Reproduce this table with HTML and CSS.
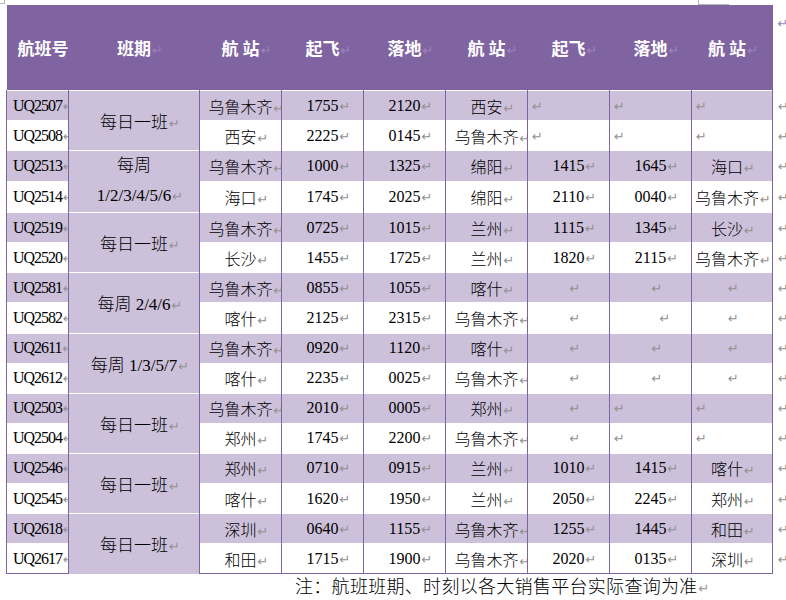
FILE: index.html
```html
<!DOCTYPE html>
<html lang="zh-CN">
<head>
<meta charset="utf-8">
<title>航班时刻表</title>
<link rel="stylesheet" href="styles.css">
</head>
<body>
<div class="page">
  <span class="crn crn-tl"></span>
  <span class="crn crn-tr"></span>
  <table class="tt">
    <colgroup>
      <col class="w62"><col class="w131"><col class="w82"><col class="w82"><col class="w82"><col class="w82"><col class="w82"><col class="w82"><col class="w81"><col class="w14">
    </colgroup>
    <thead>
      <tr class="head">
        <th class="h1">航班号</th>
        <th>班期<i class="pm"></i></th>
        <th>航 站<i class="pm"></i></th>
        <th>起飞<i class="pm"></i></th>
        <th>落地<i class="pm"></i></th>
        <th>航 站<i class="pm"></i></th>
        <th>起飞<i class="pm"></i></th>
        <th>落地<i class="pm"></i></th>
        <th class="c9">航 站<i class="pm"></i></th>
        <th class="end"><i class="pm"></i></th>
      </tr>
    </thead>
    <tbody>
      <tr class="a">
        <td class="fl">UQ2507<i class="pm"></i></td>
        <td class="sched" rowspan="2">每日一班<i class="pm"></i></td>
        <td>乌鲁木齐<i class="pm"></i></td><td>1755<i class="pm"></i></td><td>2120<i class="pm"></i></td><td>西安<i class="pm"></i></td>
        <td class="l"><i class="pm"></i></td><td class="l"><i class="pm"></i></td><td class="l"><i class="pm"></i></td>
        <td class="end"><i class="pm"></i></td>
      </tr>
      <tr>
        <td class="fl">UQ2508<i class="pm"></i></td>
        <td>西安<i class="pm"></i></td><td>2225<i class="pm"></i></td><td>0145<i class="pm"></i></td><td>乌鲁木齐<i class="pm"></i></td>
        <td class="l"><i class="pm"></i></td><td class="l"><i class="pm"></i></td><td class="l"><i class="pm"></i></td>
        <td class="end"><i class="pm"></i></td>
      </tr>
      <tr class="a">
        <td class="fl">UQ2513<i class="pm"></i></td>
        <td class="sched two" rowspan="2">每周<br>1/2/3/4/5/6<i class="pm"></i></td>
        <td>乌鲁木齐<i class="pm"></i></td><td>1000<i class="pm"></i></td><td>1325<i class="pm"></i></td><td>绵阳<i class="pm"></i></td>
        <td>1415<i class="pm"></i></td><td>1645<i class="pm"></i></td><td class="c9">海口<i class="pm"></i></td>
        <td class="end"><i class="pm"></i></td>
      </tr>
      <tr>
        <td class="fl">UQ2514<i class="pm"></i></td>
        <td>海口<i class="pm"></i></td><td>1745<i class="pm"></i></td><td>2025<i class="pm"></i></td><td>绵阳<i class="pm"></i></td>
        <td>2110<i class="pm"></i></td><td>0040<i class="pm"></i></td><td class="c9">乌鲁木齐<i class="pm"></i></td>
        <td class="end"><i class="pm"></i></td>
      </tr>
      <tr class="a">
        <td class="fl">UQ2519<i class="pm"></i></td>
        <td class="sched" rowspan="2">每日一班<i class="pm"></i></td>
        <td>乌鲁木齐<i class="pm"></i></td><td>0725<i class="pm"></i></td><td>1015<i class="pm"></i></td><td>兰州<i class="pm"></i></td>
        <td>1115<i class="pm"></i></td><td>1345<i class="pm"></i></td><td class="c9">长沙<i class="pm"></i></td>
        <td class="end"><i class="pm"></i></td>
      </tr>
      <tr>
        <td class="fl">UQ2520<i class="pm"></i></td>
        <td>长沙<i class="pm"></i></td><td>1455<i class="pm"></i></td><td>1725<i class="pm"></i></td><td>兰州<i class="pm"></i></td>
        <td>1820<i class="pm"></i></td><td>2115<i class="pm"></i></td><td class="c9">乌鲁木齐<i class="pm"></i></td>
        <td class="end"><i class="pm"></i></td>
      </tr>
      <tr class="a">
        <td class="fl">UQ2581<i class="pm"></i></td>
        <td class="sched" rowspan="2">每周 2/4/6<i class="pm"></i></td>
        <td>乌鲁木齐<i class="pm"></i></td><td>0855<i class="pm"></i></td><td>1055<i class="pm"></i></td><td>喀什<i class="pm"></i></td>
        <td><i class="pm"></i></td><td><i class="pm"></i></td><td class="c9"><i class="pm"></i></td>
        <td class="end"><i class="pm"></i></td>
      </tr>
      <tr>
        <td class="fl">UQ2582<i class="pm"></i></td>
        <td>喀什<i class="pm"></i></td><td>2125<i class="pm"></i></td><td>2315<i class="pm"></i></td><td>乌鲁木齐<i class="pm"></i></td>
        <td><i class="pm"></i></td><td class="r"><i class="pm"></i></td><td class="c9"><i class="pm"></i></td>
        <td class="end"><i class="pm"></i></td>
      </tr>
      <tr class="a">
        <td class="fl">UQ2611<i class="pm"></i></td>
        <td class="sched" rowspan="2">每周 1/3/5/7<i class="pm"></i></td>
        <td>乌鲁木齐<i class="pm"></i></td><td>0920<i class="pm"></i></td><td>1120<i class="pm"></i></td><td>喀什<i class="pm"></i></td>
        <td><i class="pm"></i></td><td><i class="pm"></i></td><td class="c9"><i class="pm"></i></td>
        <td class="end"><i class="pm"></i></td>
      </tr>
      <tr>
        <td class="fl">UQ2612<i class="pm"></i></td>
        <td>喀什<i class="pm"></i></td><td>2235<i class="pm"></i></td><td>0025<i class="pm"></i></td><td>乌鲁木齐<i class="pm"></i></td>
        <td><i class="pm"></i></td><td><i class="pm"></i></td><td class="c9"><i class="pm"></i></td>
        <td class="end"><i class="pm"></i></td>
      </tr>
      <tr class="a">
        <td class="fl">UQ2503<i class="pm"></i></td>
        <td class="sched" rowspan="2">每日一班<i class="pm"></i></td>
        <td>乌鲁木齐<i class="pm"></i></td><td>2010<i class="pm"></i></td><td>0005<i class="pm"></i></td><td>郑州<i class="pm"></i></td>
        <td><i class="pm"></i></td><td class="l"><i class="pm"></i></td><td class="l"><i class="pm"></i></td>
        <td class="end"><i class="pm"></i></td>
      </tr>
      <tr>
        <td class="fl">UQ2504<i class="pm"></i></td>
        <td>郑州<i class="pm"></i></td><td>1745<i class="pm"></i></td><td>2200<i class="pm"></i></td><td>乌鲁木齐<i class="pm"></i></td>
        <td><i class="pm"></i></td><td class="l"><i class="pm"></i></td><td class="l"><i class="pm"></i></td>
        <td class="end"><i class="pm"></i></td>
      </tr>
      <tr class="a">
        <td class="fl">UQ2546<i class="pm"></i></td>
        <td class="sched" rowspan="2">每日一班<i class="pm"></i></td>
        <td>郑州<i class="pm"></i></td><td>0710<i class="pm"></i></td><td>0915<i class="pm"></i></td><td>兰州<i class="pm"></i></td>
        <td>1010<i class="pm"></i></td><td>1415<i class="pm"></i></td><td class="c9">喀什<i class="pm"></i></td>
        <td class="end"><i class="pm"></i></td>
      </tr>
      <tr>
        <td class="fl">UQ2545<i class="pm"></i></td>
        <td>喀什<i class="pm"></i></td><td>1620<i class="pm"></i></td><td>1950<i class="pm"></i></td><td>兰州<i class="pm"></i></td>
        <td>2050<i class="pm"></i></td><td>2245<i class="pm"></i></td><td class="c9">郑州<i class="pm"></i></td>
        <td class="end"><i class="pm"></i></td>
      </tr>
      <tr class="a">
        <td class="fl">UQ2618<i class="pm"></i></td>
        <td class="sched" rowspan="2">每日一班<i class="pm"></i></td>
        <td>深圳<i class="pm"></i></td><td>0640<i class="pm"></i></td><td>1155<i class="pm"></i></td><td>乌鲁木齐<i class="pm"></i></td>
        <td>1255<i class="pm"></i></td><td>1445<i class="pm"></i></td><td class="c9">和田<i class="pm"></i></td>
        <td class="end"><i class="pm"></i></td>
      </tr>
      <tr class="last">
        <td class="fl">UQ2617<i class="pm"></i></td>
        <td>和田<i class="pm"></i></td><td>1715<i class="pm"></i></td><td>1900<i class="pm"></i></td><td>乌鲁木齐<i class="pm"></i></td>
        <td>2020<i class="pm"></i></td><td>0135<i class="pm"></i></td><td class="c9">深圳<i class="pm"></i></td>
        <td class="end"><i class="pm"></i></td>
      </tr>
    </tbody>
  </table>
  <p class="note">注：航班班期、时刻以各大销售平台实际查询为准<i class="pm"></i></p>
</div>
</body>
</html>
```

FILE: styles.css
```css
html, body {
  margin: 0;
  padding: 0;
  background: #ffffff;
}

body {
  font-family: "Liberation Serif", "Noto Sans CJK SC", serif;
  color: #000000;
}

.page {
  position: relative;
  padding: 5px 0 0 6px;
}

.crn {
  position: absolute;
  display: block;
  border-color: #b5b5b5;
  border-style: solid;
}

.crn-tl {
  left: 0;
  top: 0;
  width: 4px;
  height: 3px;
  border-width: 0 1px 1px 0;
}

.crn-tr {
  left: 698px;
  top: 0;
  width: 30px;
  height: 4px;
  border-width: 0 0 1px 1px;
}

.tt {
  border-collapse: collapse;
  table-layout: fixed;
  width: 780px;
}

.w62 { width: 62px; }
.w131 { width: 131px; }
.w82 { width: 82px; }
.w81 { width: 81px; }
.w14 { width: 14px; }

.head th {
  height: 85px;
  padding: 0;
  background: #8064a2;
  color: #ffffff;
  font-size: 17px;
  font-weight: 700;
  text-align: center;
  vertical-align: middle;
  white-space: nowrap;
}

.head th .pm::after {
  color: #9a85b8;
}

.head th.h1 {
  text-align: left;
  padding-left: 11px;
}

.head th.c9 {
  padding-right: 10px;
}

.head th.end {
  height: 77px;
  background: transparent;
  text-align: left;
  vertical-align: top;
  padding: 8px 0 0 4px;
}

td {
  height: 29.1px;
  padding: 0 2px;
  font-size: 16px;
  font-weight: 300;
  text-align: center;
  vertical-align: middle;
  white-space: nowrap;
  overflow: hidden;
  border-left: 1px solid #8064a2;
  border-right: 1px solid #8064a2;
  border-top: 1px solid #ffffff;
}

tr.a td {
  background: #ccc0da;
}

tr.last td {
  border-bottom: 1px solid #8064a2;
}

td.fl {
  text-align: left;
  padding-left: 6px;
  letter-spacing: -1px;
}

td.sched {
  background: #ccc0da;
  font-size: 17px;
}

td.sched.two {
  line-height: 30px;
}

td.l {
  text-align: left;
  padding-left: 3px;
}

td.r {
  padding-left: 18px;
}

td.c9 {
  padding-right: 10px;
  padding-left: 0;
}

tr td.end,
tr.a td.end,
tr.last td.end {
  background: transparent;
  border: none;
  text-align: left;
  padding-left: 4px;
  overflow: visible;
}

.pm {
  display: inline-block;
  width: 0;
  overflow: visible;
  font-style: normal;
  letter-spacing: 0;
}

.pm::after {
  content: "\21B5";
  font-family: "DejaVu Sans", sans-serif;
  font-size: 13px;
  font-weight: 400;
  color: #929292;
  padding-left: 1px;
}

.note {
  margin: 0;
  padding-left: 289px;
  font-size: 18px;
  font-weight: 300;
  line-height: 26px;
  letter-spacing: 0.3px;
  white-space: nowrap;
}
```
